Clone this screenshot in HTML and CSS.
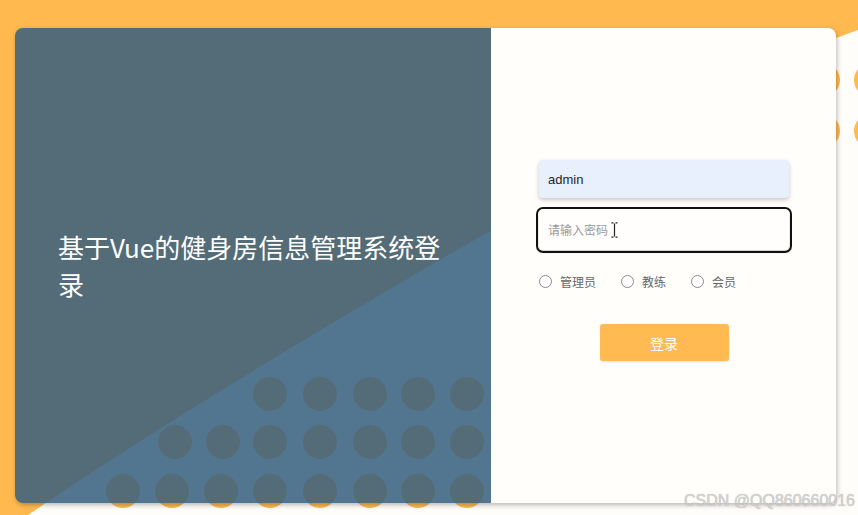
FILE: index.html
```html
<!DOCTYPE html>
<html lang="zh">
<head>
<meta charset="utf-8">
<title>登录</title>
<link rel="stylesheet" href="styles.css">
</head>
<body>
<svg class="backdrop" width="858" height="515" viewBox="0 0 858 515" aria-hidden="true">
  <defs>
    <clipPath id="white-area"><path d="M28 515 Q300 330 836 38 L858 30 L858 515 Z"/></clipPath>
  </defs>
  <rect width="858" height="515" fill="#ffb94f"/>
  <path d="M28 515 Q300 330 836 38 L858 30 L858 515 Z" fill="#fffdfa"/>
  <g fill="#ffb94f" clip-path="url(#white-area)">
    <circle cx="270" cy="394" r="17"/><circle cx="320" cy="394" r="17"/><circle cx="370" cy="394" r="17"/><circle cx="418" cy="394" r="17"/><circle cx="467" cy="394" r="17"/>
    <circle cx="175" cy="442" r="17"/><circle cx="223" cy="442" r="17"/><circle cx="270" cy="442" r="17"/><circle cx="320" cy="442" r="17"/><circle cx="370" cy="442" r="17"/><circle cx="418" cy="442" r="17"/><circle cx="467" cy="442" r="17"/>
    <circle cx="123" cy="491" r="17"/><circle cx="172" cy="491" r="17"/><circle cx="221" cy="491" r="17"/><circle cx="270" cy="491" r="17"/><circle cx="320" cy="491" r="17"/><circle cx="370" cy="491" r="17"/><circle cx="418" cy="491" r="17"/><circle cx="467" cy="491" r="17"/>
    <circle cx="823" cy="80" r="17"/><circle cx="871" cy="80" r="17"/><circle cx="823" cy="131" r="17"/><circle cx="871" cy="131" r="17"/>
  </g>
</svg>
<main class="page">
  <section class="card">
    <div class="intro">
      <h1 class="title">基于Vue的健身房信息管理系统登录</h1>
    </div>
    <form class="login">
      <input class="field field-user" type="text" value="admin">
      <div class="pass-wrap">
        <input class="field field-pass" type="password" placeholder="请输入密码">
        <svg class="ibeam" width="7" height="16" viewBox="0 0 7 16" aria-hidden="true">
          <path d="M0.5 0.8 H2.5 M4.5 0.8 H6.5 M3.5 1.5 V14.5 M0.5 15.2 H2.5 M4.5 15.2 H6.5" stroke="#222" stroke-width="1.2" fill="none"/>
        </svg>
      </div>
      <div class="roles">
        <label class="role"><input class="radio" type="radio" name="role"><span>管理员</span></label>
        <label class="role"><input class="radio" type="radio" name="role"><span>教练</span></label>
        <label class="role"><input class="radio" type="radio" name="role"><span>会员</span></label>
      </div>
      <button class="submit" type="button">登录</button>
    </form>
  </section>
</main>
<div class="watermark">CSDN @QQ860660016</div>
</body>
</html>
```

FILE: styles.css
```css
* { box-sizing: border-box; }

html, body {
  margin: 0;
  width: 858px;
  height: 515px;
  overflow: hidden;
}

body {
  position: relative;
  font-family: "Liberation Sans", "Noto Sans CJK SC", sans-serif;
  background: #ffb94f;
}

.backdrop {
  position: absolute;
  left: 0;
  top: 0;
  z-index: 0;
}

.page {
  position: relative;
  z-index: 1;
  height: 515px;
  padding: 28px 22px 12px 15px;
  display: flex;
}

.card {
  flex: 1;
  display: grid;
  grid-template-columns: 476px 1fr;
  border-radius: 8px;
  overflow: hidden;
  box-shadow: 1px 2px 5px rgba(0, 0, 0, 0.28);
}

.intro {
  background: rgba(55, 96, 126, 0.86);
  display: flex;
  align-items: center;
  padding: 0 40px 0 43px;
}

.title {
  margin: 0;
  max-width: 400px;
  color: #ffffff;
  font-family: "Noto Sans CJK SC", sans-serif;
  font-weight: 400;
  font-size: 26px;
  line-height: 37px;
  padding-bottom: 2px;
}

.login {
  background: #fffefb;
  display: flex;
  flex-direction: column;
  justify-content: center;
  padding: 0 47px 10px 48px;
}

.field {
  display: block;
  width: 250px;
  border: none;
  border-radius: 4px;
  padding: 0 9px;
  font-family: "Liberation Sans", "Noto Sans CJK SC", sans-serif;
  font-size: 13px;
  color: #1f1f1f;
  outline: none;
}

.field-user {
  height: 38px;
  background: #e8f0fe;
  box-shadow: 0 2px 4px rgba(0, 0, 0, 0.22);
}

.pass-wrap {
  position: relative;
  margin-top: 12px;
  width: 250px;
}

.field-pass {
  height: 40px;
  background: #fffefc;
  outline: 2px solid #111111;
  outline-offset: 1px;
  box-shadow: 0 2px 3px rgba(0, 0, 0, 0.2);
}

.field-pass::placeholder {
  color: #9a9a9a;
  font-size: 12px;
}

.ibeam {
  position: absolute;
  left: 72px;
  top: 12px;
}

.roles {
  display: flex;
  gap: 25px;
  margin-top: 23px;
  height: 16px;
  align-items: center;
}

.role {
  display: flex;
  align-items: center;
  gap: 8px;
  font-family: "Noto Sans CJK SC", sans-serif;
  font-size: 12px;
  color: #666666;
}

.radio {
  appearance: none;
  -webkit-appearance: none;
  margin: 0;
  width: 13px;
  height: 13px;
  border: 1px solid #8a8a8a;
  border-radius: 50%;
  background: #ffffff;
}

.submit {
  align-self: center;
  margin-top: 35px;
  width: 129px;
  height: 37px;
  border: none;
  border-radius: 3px;
  background: #ffba52;
  color: #ffffff;
  font-family: "Noto Sans CJK SC", sans-serif;
  font-size: 14px;
  box-shadow: 0 1px 2px rgba(0, 0, 0, 0.12);
}

.watermark {
  position: absolute;
  right: 3px;
  bottom: 5px;
  z-index: 2;
  font-family: "Liberation Sans", sans-serif;
  font-size: 16px;
  color: #d2d2d2;
  text-shadow: 0 0 1px rgba(0, 0, 0, 0.3);
}
```
